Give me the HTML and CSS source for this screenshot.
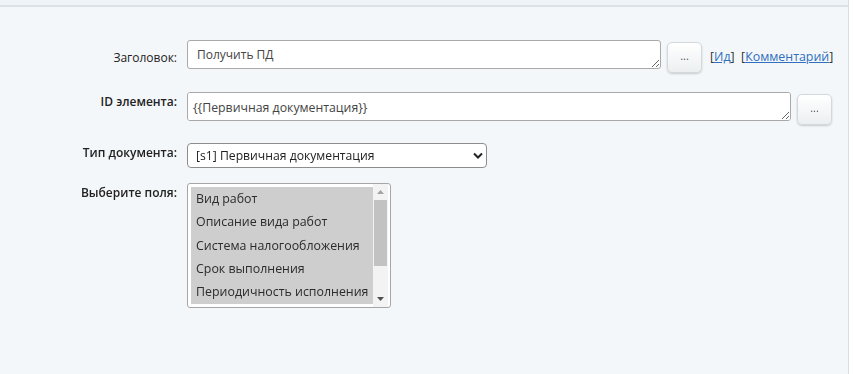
FILE: index.html
```html
<!DOCTYPE html>
<html lang="ru">
<head>
  <meta charset="UTF-8">
  <title>Свойства блока</title>
  <link rel="stylesheet" href="styles.css">
</head>
<body>
  <div class="page">
    <div class="topbar"></div>
    <form class="props">

      <div class="row row-title">
        <label class="cap" for="title">Заголовок:</label>
        <textarea class="field field-title" id="title">Получить ПД</textarea>
        <button type="button" class="dots">...</button>
        <span class="links">[<a href="#">Ид</a>] &nbsp;[<a href="#">Комментарий</a>]</span>
      </div>

      <div class="row row-id">
        <label class="cap bold" for="elemId">ID элемента:</label>
        <textarea class="field field-id" id="elemId">{{Первичная документация}}</textarea>
        <button type="button" class="dots">...</button>
      </div>

      <div class="row row-type">
        <label class="cap bold" for="docType">Тип документа:</label>
        <div class="select-wrap">
          <select class="select" id="docType">
            <option>[s1] Первичная документация</option>
          </select>
          <svg class="chevron" width="10" height="7" viewBox="0 0 10 7">
            <path d="M1 1.5 L5 5.5 L9 1.5" fill="none" stroke="#222" stroke-width="2"/>
          </svg>
        </div>
      </div>

      <div class="row row-fields">
        <label class="cap bold">Выберите поля:</label>
        <div class="listbox">
          <div class="options">
            <div class="opt">Вид работ</div>
            <div class="opt">Описание вида работ</div>
            <div class="opt">Система налогообложения</div>
            <div class="opt">Срок выполнения</div>
            <div class="opt">Периодичность исполнения</div>
          </div>
          <div class="scroll">
            <svg class="arrow" width="7" height="4" viewBox="0 0 7 4"><path d="M0 4 L3.5 0 L7 4 Z" fill="#a3a3a3"/></svg>
            <div class="track"><div class="thumb"></div></div>
            <svg class="arrow" width="7" height="4" viewBox="0 0 7 4"><path d="M0 0 L3.5 4 L7 0 Z" fill="#505050"/></svg>
          </div>
        </div>
      </div>

    </form>
  </div>
</body>
</html>
```

FILE: styles.css
```css
body {
  margin: 0;
  background-color: #ffffff;
  font-family: "Open Sans", "Noto Sans", sans-serif;
  font-size: 12px;
  color: #222;
}

.page {
  width: 848px;
  height: 374px;
  background-color: #f4f7f9;
  border-right: 1px solid #d9dee3;
}

.topbar {
  height: 5px;
  background-color: #eff4f8;
  border-bottom: 2px solid #dde2e7;
}

.props {
  padding-top: 33px;
}

.row {
  display: flex;
  align-items: flex-start;
}

.cap {
  width: 177px;
  margin-right: 10px;
  text-align: right;
  line-height: 18px;
  color: #222;
}

.bold {
  font-weight: 600;
}

.field {
  box-sizing: border-box;
  height: 29px;
  padding: 5px 9px;
  border: 1px solid #a9a9a9;
  border-radius: 3px;
  background-color: #fff;
  font-family: "Open Sans", "Noto Sans", sans-serif;
  font-size: 12px;
  color: #444;
  line-height: 17px;
  resize: both;
}

.field-title {
  width: 474px;
}

.field-id {
  width: 604px;
  padding: 6px 5px;
  font-size: 12.3px;
}

.dots {
  box-sizing: border-box;
  width: 35px;
  height: 31px;
  margin-left: 6px;
  margin-top: 2px;
  border: 1px solid #d4d8dc;
  border-radius: 5px;
  background: linear-gradient(#ffffff, #eceff1);
  box-shadow: 0 1px 2px rgba(0, 0, 0, 0.18);
  font-family: "Open Sans", sans-serif;
  font-size: 11px;
  color: #555;
  padding: 0 0 4px;
  cursor: pointer;
}

.links {
  margin-left: 8px;
  margin-top: 8px;
  line-height: 18px;
  font-size: 12.4px;
  color: #333;
}

.links a {
  color: #2f6fc0;
}

.row-title .cap {
  padding-top: 9px;
}

.row-id {
  margin-top: 19px;
}

.row-id .cap {
  padding-top: 1px;
}

.row-type {
  margin-top: 18px;
}

.row-type .cap {
  padding-top: 1px;
}

.row-fields {
  margin-top: 15px;
}

.row-fields .cap {
  padding-top: 1px;
}

.select-wrap {
  position: relative;
}

.select {
  appearance: none;
  box-sizing: border-box;
  width: 300px;
  height: 25px;
  padding: 0 8px;
  border: 1px solid #8d8d8d;
  border-radius: 4px;
  background-color: #fff;
  font-family: "Open Sans", "Noto Sans", sans-serif;
  font-size: 12.2px;
  color: #222;
}

.chevron {
  position: absolute;
  right: 4px;
  top: 9px;
}

.listbox {
  box-sizing: border-box;
  width: 204px;
  height: 125px;
  display: flex;
  padding: 3px 1px 3px 3px;
  border: 1px solid #a6a6a6;
  border-radius: 3px;
  background-color: #fff;
}

.options {
  width: 182px;
  background-color: #cecece;
}

.opt {
  height: 23.3px;
  line-height: 23px;
  padding-left: 5px;
  font-size: 12.4px;
  color: #2b2b2b;
  white-space: nowrap;
}

.scroll {
  width: 15px;
  margin-top: -3px;
  margin-bottom: -3px;
  display: flex;
  flex-direction: column;
  align-items: center;
  background-color: #f3f3f3;
}

.arrow {
  margin: 6px 0;
}

.track {
  flex: 1;
  width: 100%;
  display: flex;
  justify-content: center;
}

.thumb {
  width: 13px;
  height: 66px;
  background-color: #c2c2c2;
}
```
